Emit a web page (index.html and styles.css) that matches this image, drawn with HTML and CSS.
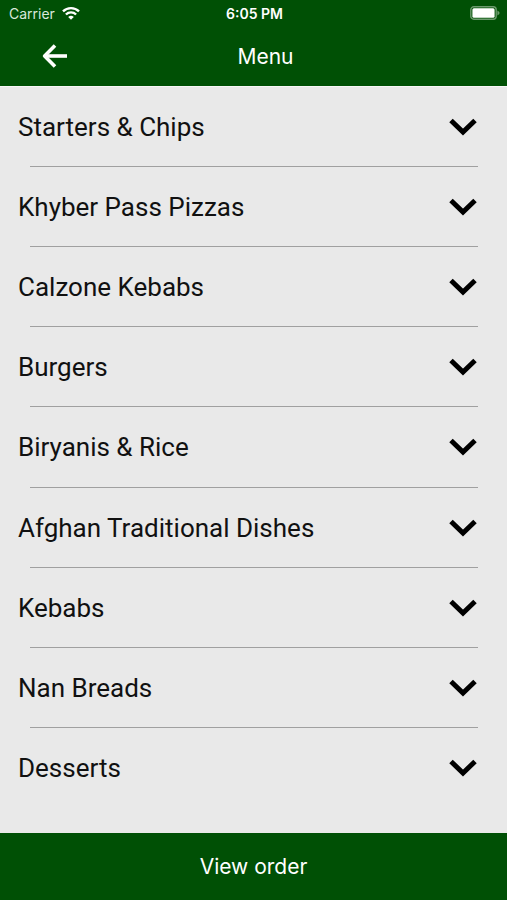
FILE: index.html
```
<!DOCTYPE html>
<html lang="en">
<head>
    <meta charset="UTF-8">
    <meta name="viewport" content="width=device-width, initial-scale=1.0">
    <title>Menu</title>
    <link rel="stylesheet" href="styles.css">
</head>
<body>
    <header class="header">
        <div class="status-bar">
            <div class="carrier">
                <span>Carrier</span>
                <svg class="wifi" viewBox="0 0 18 14" fill="none" stroke="#fff" stroke-width="2.4">
                    <path d="M1 5.4 A11.4 11.4 0 0 1 17 5.4"/>
                    <path d="M3.9 8.5 A7.2 7.2 0 0 1 14.1 8.5"/>
                    <path d="M9 13.8 L6.2 11 A4 4 0 0 1 11.8 11 Z" fill="#fff" stroke="none"/>
                </svg>
            </div>
            <div class="time">6:05 PM</div>
            <svg class="battery" viewBox="0 0 30 14">
                <rect x="0.8" y="0.8" width="25.4" height="12.4" rx="3" fill="none" stroke="#6b9a6d" stroke-width="1.4"/>
                <rect x="2.4" y="2.2" width="22.2" height="9.6" rx="1.5" fill="#fff"/>
                <path d="M27.4 4.5 Q29.6 5.6 29.6 7 Q29.6 8.4 27.4 9.5 Z" fill="#6b9a6d"/>
            </svg>
        </div>
        <div class="nav-bar">
            <button class="back-btn" aria-label="Back">
                <svg viewBox="0 0 26 24" fill="none" stroke="#fff" stroke-width="3.6">
                    <path d="M25 12 H3"/>
                    <path d="M13 1.6 L2.6 12 L13 22.4" stroke-linejoin="round"/>
                </svg>
            </button>
            <h1 class="title">Menu</h1>
        </div>
    </header>

    <main class="menu-list">
        <button class="menu-item">
            <span>Starters &amp; Chips</span>
            <svg class="chevron" viewBox="0 0 28 18"><path d="M2 2.5 L14 14 L26 2.5"/></svg>
        </button>
        <button class="menu-item">
            <span>Khyber Pass Pizzas</span>
            <svg class="chevron" viewBox="0 0 28 18"><path d="M2 2.5 L14 14 L26 2.5"/></svg>
        </button>
        <button class="menu-item">
            <span>Calzone Kebabs</span>
            <svg class="chevron" viewBox="0 0 28 18"><path d="M2 2.5 L14 14 L26 2.5"/></svg>
        </button>
        <button class="menu-item">
            <span>Burgers</span>
            <svg class="chevron" viewBox="0 0 28 18"><path d="M2 2.5 L14 14 L26 2.5"/></svg>
        </button>
        <button class="menu-item">
            <span>Biryanis &amp; Rice</span>
            <svg class="chevron" viewBox="0 0 28 18"><path d="M2 2.5 L14 14 L26 2.5"/></svg>
        </button>
        <button class="menu-item">
            <span>Afghan Traditional Dishes</span>
            <svg class="chevron" viewBox="0 0 28 18"><path d="M2 2.5 L14 14 L26 2.5"/></svg>
        </button>
        <button class="menu-item">
            <span>Kebabs</span>
            <svg class="chevron" viewBox="0 0 28 18"><path d="M2 2.5 L14 14 L26 2.5"/></svg>
        </button>
        <button class="menu-item">
            <span>Nan Breads</span>
            <svg class="chevron" viewBox="0 0 28 18"><path d="M2 2.5 L14 14 L26 2.5"/></svg>
        </button>
        <button class="menu-item">
            <span>Desserts</span>
            <svg class="chevron" viewBox="0 0 28 18"><path d="M2 2.5 L14 14 L26 2.5"/></svg>
        </button>
    </main>

    <button class="order-btn">View order</button>
</body>
</html>
```
FILE: styles.css
```
* {
    box-sizing: border-box;
}
body {
    margin: 0;
    min-height: 100vh;
    display: flex;
    flex-direction: column;
    font-family: Inter, "Liberation Sans", sans-serif;
    background-color: #e9e9e9;
    color: #111;
}
button {
    margin: 0;
    padding: 0;
    border: none;
    background: none;
    font-family: inherit;
    color: inherit;
    cursor: pointer;
}
svg {
    display: block;
}
.header {
    background-color: #005005;
    color: white;
}
.status-bar {
    display: grid;
    grid-template-columns: 1fr auto 1fr;
    align-items: center;
    height: 26px;
    padding: 0 7px 0 9px;
    font-size: 14px;
}
.carrier {
    display: flex;
    align-items: center;
    gap: 7px;
    color: #d9e8da;
}
.wifi {
    width: 18px;
    height: 14px;
}
.time {
    font-weight: 600;
}
.battery {
    width: 30px;
    height: 14px;
    justify-self: end;
}
.nav-bar {
    display: grid;
    grid-template-columns: 1fr auto 1fr;
    align-items: center;
    height: 60px;
    padding: 0 42px;
}
.title {
    grid-column: 2;
    margin: 0;
    padding-left: 24px;
    font-size: 21px;
    font-weight: normal;
}
.back-btn {
    width: 26px;
}
.menu-list {
    flex: 1;
    display: grid;
    grid-auto-rows: 1fr;
    padding-bottom: 25px;
    border-top: 1px solid #f7f7f7;
}
.menu-item {
    position: relative;
    display: flex;
    justify-content: space-between;
    align-items: center;
    min-height: 60px;
    padding: 0 30px 0 18px;
    font-family: Roboto, "Liberation Sans", sans-serif;
    font-size: 26px;
    text-align: left;
}
/* inset divider between rows */
.menu-item:not(:last-child)::after {
    content: "";
    position: absolute;
    left: 30px;
    right: 29px;
    bottom: 0;
    height: 1px;
    background-color: #a0a0a0;
}
.chevron {
    width: 28px;
    height: 18px;
    fill: none;
    stroke: #000;
    stroke-width: 5;
}
.order-btn {
    height: 67px;
    background-color: #005005;
    color: white;
    font-size: 21px;
}
```
